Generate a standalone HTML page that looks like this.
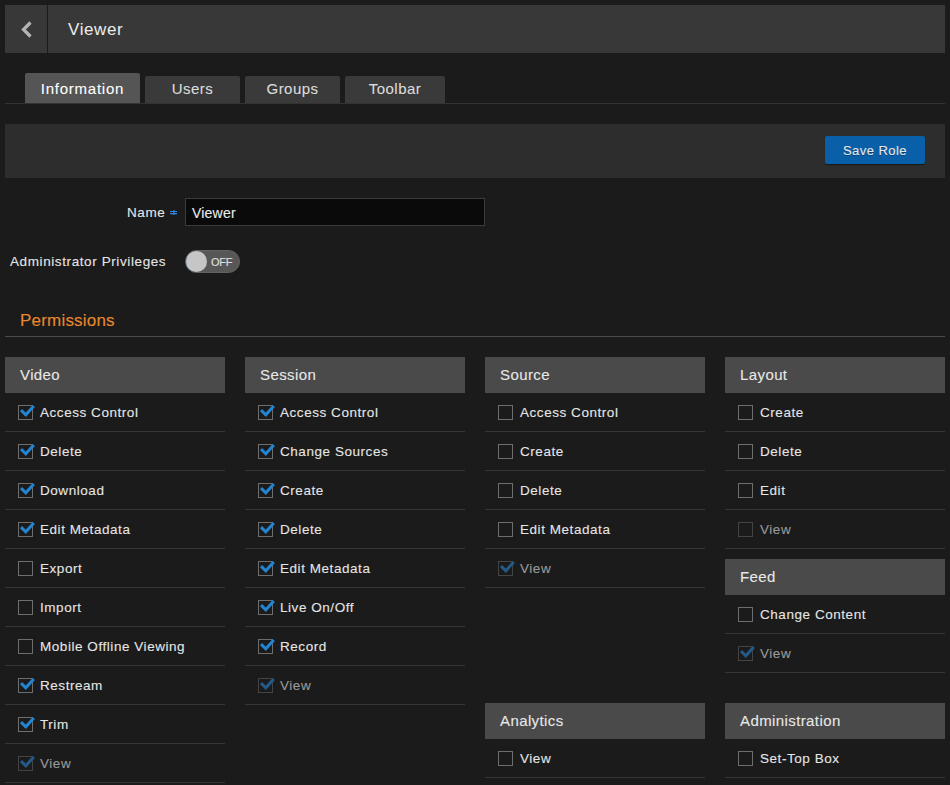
<!DOCTYPE html>
<html><head><meta charset="utf-8">
<style>
*{box-sizing:border-box;margin:0;padding:0}
html,body{width:950px;height:785px;overflow:hidden;background:#1b1b1b;font-family:"Liberation Sans",sans-serif;color:#e6e6e6;-webkit-text-stroke:0.1px currentColor}
.abs{position:absolute}
#hdr{left:5px;top:5px;width:940px;height:48px;background:#383838}
#back{left:0;top:0;width:43px;height:48px;border-right:1px solid #1b1b1b}
#title{left:63px;top:1px;height:48px;line-height:48px;font-size:17px;letter-spacing:0.6px;color:#ececec;-webkit-text-stroke:0}
#tabline{left:5px;top:103px;width:940px;height:1px;background:#333}
.tab{position:absolute;top:76px;height:27px;background:#3a3a3a;border-radius:2px 2px 0 0;font-size:15px;text-align:center;line-height:26px;color:#dcdcdc;letter-spacing:0.45px}
.tab.act{top:73px;height:30px;line-height:31px;background:#555;color:#fff;letter-spacing:0.75px}
#bar{left:5px;top:124px;width:940px;height:54px;background:#2d2d2d}
#save{left:820px;top:12px;width:100px;height:28px;background:#0a5fa9;border-radius:2px;box-shadow:0 1px 1px rgba(0,0,0,.5);color:#e8e8e8;font-size:13px;text-align:center;line-height:29px;letter-spacing:0.45px;text-shadow:0 1px 0 rgba(0,0,0,.35)}
.lbl{position:absolute;font-size:13.5px;color:#e6e6e6;letter-spacing:0.6px}
#nameinp{left:185px;top:198px;width:300px;height:28px;background:#0a0a0a;border:1px solid #3b3b3b}
#toggle{left:185px;top:250px;width:55px;height:23px;border-radius:12px;background:#575757;border:1px solid #636363}
#knob{left:0;top:0;width:21px;height:21px;border-radius:50%;background:#c6c6c6;box-shadow:-0.5px 0 0 rgba(60,120,170,.5)}
#perm{left:20px;top:311px;font-size:17px;color:#e8892f;letter-spacing:0.2px}
#permline{left:5px;top:336px;width:940px;height:1px;background:#4a4a4a}
.sec{position:absolute;width:220px}
.sh{height:36px;background:#4a4a4a;font-size:15px;line-height:36px;padding-left:15px;color:#e8e8e8;letter-spacing:0.4px}
.row{position:relative;height:39px;border-bottom:1px solid #363636}
.cb{position:absolute;left:13px;top:12px;width:15px;height:15px;border:1px solid #6e6e6e}
.row span{position:absolute;left:35px;top:1px;line-height:38px;font-size:13.5px;letter-spacing:0.55px;color:#e6e6e6}
.row.dis span{color:#9a9a9a}
.row.dis .cb{border-color:#444}
.ck{position:absolute;left:-1px;top:-1px;width:18px;height:15px;overflow:visible}
</style></head><body>
<div id="hdr" class="abs">
  <div id="back" class="abs"><svg class="abs" style="left:15px;top:16px" width="14" height="18" viewBox="0 0 14 18"><path d="M10.5 1.5 L3.5 8.5 L10.5 15.5" fill="none" stroke="#b4b4b4" stroke-width="3.2"/></svg></div>
  <div id="title" class="abs">Viewer</div>
</div>
<div id="tabline" class="abs"></div>
<div class="tab act" style="left:25px;width:115px">Information</div>
<div class="tab" style="left:145px;width:95px">Users</div>
<div class="tab" style="left:245px;width:95px">Groups</div>
<div class="tab" style="left:345px;width:100px">Toolbar</div>
<div id="bar" class="abs"><div id="save" class="abs">Save Role</div></div>

<div class="lbl" style="left:127px;top:205px">Name</div>
<svg class="abs" style="left:169px;top:209px" width="10" height="8" viewBox="0 0 10 8"><path d="M1 2.5H8M1 4.6H8M4.9 0.9V5.9" stroke="#2f86e6" stroke-width="1.2" fill="none"/></svg>
<div id="nameinp" class="abs"><span class="abs" style="left:6px;top:6px;font-size:14px;color:#ececec;letter-spacing:0.2px">Viewer</span></div>
<div class="lbl" style="left:10px;top:254px">Administrator Privileges</div>
<div id="toggle" class="abs"><div id="knob" class="abs"></div><span class="abs" style="left:25px;top:5px;font-size:11px;letter-spacing:-0.3px;color:#e0e0e0">OFF</span></div>

<div id="perm" class="abs">Permissions</div>
<div id="permline" class="abs"></div>

<div id="cols">
<div class="sec" style="left:5px;top:357px"><div class="sh">Video</div>
<div class="row"><div class="cb"><svg class="ck" viewBox="0 0 18 15"><path d="M3 5.2 L7.8 9.8 L15.8 1" fill="none" stroke="#2384d2" stroke-width="3"/></svg></div><span>Access Control</span></div>
<div class="row"><div class="cb"><svg class="ck" viewBox="0 0 18 15"><path d="M3 5.2 L7.8 9.8 L15.8 1" fill="none" stroke="#2384d2" stroke-width="3"/></svg></div><span>Delete</span></div>
<div class="row"><div class="cb"><svg class="ck" viewBox="0 0 18 15"><path d="M3 5.2 L7.8 9.8 L15.8 1" fill="none" stroke="#2384d2" stroke-width="3"/></svg></div><span>Download</span></div>
<div class="row"><div class="cb"><svg class="ck" viewBox="0 0 18 15"><path d="M3 5.2 L7.8 9.8 L15.8 1" fill="none" stroke="#2384d2" stroke-width="3"/></svg></div><span>Edit Metadata</span></div>
<div class="row"><div class="cb"></div><span>Export</span></div>
<div class="row"><div class="cb"></div><span>Import</span></div>
<div class="row"><div class="cb"></div><span>Mobile Offline Viewing</span></div>
<div class="row"><div class="cb"><svg class="ck" viewBox="0 0 18 15"><path d="M3 5.2 L7.8 9.8 L15.8 1" fill="none" stroke="#2384d2" stroke-width="3"/></svg></div><span>Restream</span></div>
<div class="row"><div class="cb"><svg class="ck" viewBox="0 0 18 15"><path d="M3 5.2 L7.8 9.8 L15.8 1" fill="none" stroke="#2384d2" stroke-width="3"/></svg></div><span>Trim</span></div>
<div class="row dis"><div class="cb"><svg class="ck" viewBox="0 0 18 15"><path d="M3 5.2 L7.8 9.8 L15.8 1" fill="none" stroke="#245a89" stroke-width="3"/></svg></div><span>View</span></div>
</div>
<div class="sec" style="left:245px;top:357px"><div class="sh">Session</div>
<div class="row"><div class="cb"><svg class="ck" viewBox="0 0 18 15"><path d="M3 5.2 L7.8 9.8 L15.8 1" fill="none" stroke="#2384d2" stroke-width="3"/></svg></div><span>Access Control</span></div>
<div class="row"><div class="cb"><svg class="ck" viewBox="0 0 18 15"><path d="M3 5.2 L7.8 9.8 L15.8 1" fill="none" stroke="#2384d2" stroke-width="3"/></svg></div><span>Change Sources</span></div>
<div class="row"><div class="cb"><svg class="ck" viewBox="0 0 18 15"><path d="M3 5.2 L7.8 9.8 L15.8 1" fill="none" stroke="#2384d2" stroke-width="3"/></svg></div><span>Create</span></div>
<div class="row"><div class="cb"><svg class="ck" viewBox="0 0 18 15"><path d="M3 5.2 L7.8 9.8 L15.8 1" fill="none" stroke="#2384d2" stroke-width="3"/></svg></div><span>Delete</span></div>
<div class="row"><div class="cb"><svg class="ck" viewBox="0 0 18 15"><path d="M3 5.2 L7.8 9.8 L15.8 1" fill="none" stroke="#2384d2" stroke-width="3"/></svg></div><span>Edit Metadata</span></div>
<div class="row"><div class="cb"><svg class="ck" viewBox="0 0 18 15"><path d="M3 5.2 L7.8 9.8 L15.8 1" fill="none" stroke="#2384d2" stroke-width="3"/></svg></div><span>Live On/Off</span></div>
<div class="row"><div class="cb"><svg class="ck" viewBox="0 0 18 15"><path d="M3 5.2 L7.8 9.8 L15.8 1" fill="none" stroke="#2384d2" stroke-width="3"/></svg></div><span>Record</span></div>
<div class="row dis"><div class="cb"><svg class="ck" viewBox="0 0 18 15"><path d="M3 5.2 L7.8 9.8 L15.8 1" fill="none" stroke="#245a89" stroke-width="3"/></svg></div><span>View</span></div>
</div>
<div class="sec" style="left:485px;top:357px"><div class="sh">Source</div>
<div class="row"><div class="cb"></div><span>Access Control</span></div>
<div class="row"><div class="cb"></div><span>Create</span></div>
<div class="row"><div class="cb"></div><span>Delete</span></div>
<div class="row"><div class="cb"></div><span>Edit Metadata</span></div>
<div class="row dis"><div class="cb"><svg class="ck" viewBox="0 0 18 15"><path d="M3 5.2 L7.8 9.8 L15.8 1" fill="none" stroke="#245a89" stroke-width="3"/></svg></div><span>View</span></div>
</div>
<div class="sec" style="left:725px;top:357px"><div class="sh">Layout</div>
<div class="row"><div class="cb"></div><span>Create</span></div>
<div class="row"><div class="cb"></div><span>Delete</span></div>
<div class="row"><div class="cb"></div><span>Edit</span></div>
<div class="row dis"><div class="cb"></div><span>View</span></div>
</div>
<div class="sec" style="left:725px;top:559px"><div class="sh">Feed</div>
<div class="row"><div class="cb"></div><span>Change Content</span></div>
<div class="row dis"><div class="cb"><svg class="ck" viewBox="0 0 18 15"><path d="M3 5.2 L7.8 9.8 L15.8 1" fill="none" stroke="#245a89" stroke-width="3"/></svg></div><span>View</span></div>
</div>
<div class="sec" style="left:485px;top:703px"><div class="sh">Analytics</div>
<div class="row"><div class="cb"></div><span>View</span></div>
</div>
<div class="sec" style="left:725px;top:703px"><div class="sh">Administration</div>
<div class="row"><div class="cb"></div><span>Set-Top Box</span></div>
</div>
</div>
</body></html>
